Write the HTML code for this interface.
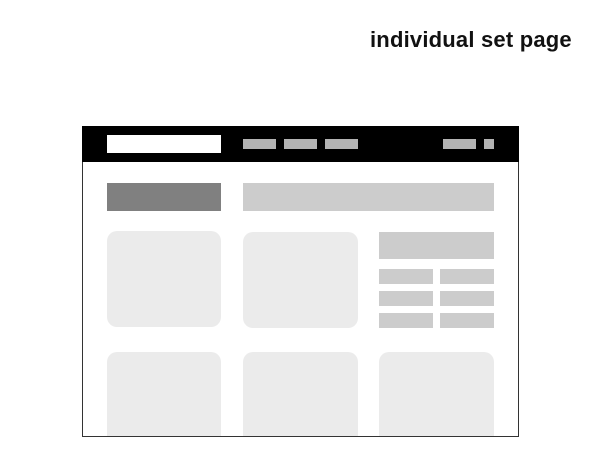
<!DOCTYPE html>
<html><head><meta charset="utf-8"><style>
html,body{margin:0;padding:0;background:#fff;width:600px;height:464px;overflow:hidden;position:relative;font-family:"Liberation Sans",Arial,sans-serif}
div{position:absolute;box-sizing:border-box}
.t{left:370px;top:27px;font-size:22px;font-weight:bold;color:#111;white-space:nowrap;letter-spacing:0.2px}
.frame{left:82px;top:126px;width:437px;height:311px;border:1px solid #333;background:#fff}
.hdr{left:82px;top:126px;width:437px;height:36px;background:#000}
.g{background:#b3b3b3}
.l{background:#cccccc}
.c{background:#ebebeb;border-radius:10px}
</style></head><body>
<div class="t">individual set page</div>
<div class="frame"></div>
<div class="hdr"></div>
<div style="left:107px;top:135px;width:114px;height:18px;background:#fff"></div>
<div class="g" style="left:243px;top:139px;width:33px;height:10px"></div>
<div class="g" style="left:284px;top:139px;width:33px;height:10px"></div>
<div class="g" style="left:325px;top:139px;width:33px;height:10px"></div>
<div class="g" style="left:443px;top:139px;width:33px;height:10px"></div>
<div class="g" style="left:484px;top:139px;width:10px;height:10px"></div>
<div style="left:107px;top:183px;width:114px;height:28px;background:#808080"></div>
<div class="l" style="left:243px;top:183px;width:251px;height:28px"></div>
<div class="c" style="left:107px;top:231px;width:114px;height:96px"></div>
<div class="c" style="left:243px;top:232px;width:115px;height:96px"></div>
<div class="l" style="left:379px;top:232px;width:115px;height:27px"></div>
<div class="l" style="left:379px;top:269px;width:54px;height:15px"></div>
<div class="l" style="left:440px;top:269px;width:54px;height:15px"></div>
<div class="l" style="left:379px;top:291px;width:54px;height:15px"></div>
<div class="l" style="left:440px;top:291px;width:54px;height:15px"></div>
<div class="l" style="left:379px;top:313px;width:54px;height:15px"></div>
<div class="l" style="left:440px;top:313px;width:54px;height:15px"></div>
<div class="c" style="left:107px;top:352px;width:114px;height:95px"></div>
<div class="c" style="left:243px;top:352px;width:115px;height:95px"></div>
<div class="c" style="left:379px;top:352px;width:115px;height:95px"></div>
<div style="left:82px;top:436px;width:437px;height:28px;background:#fff;border-top:1px solid #333"></div>
</body></html>
